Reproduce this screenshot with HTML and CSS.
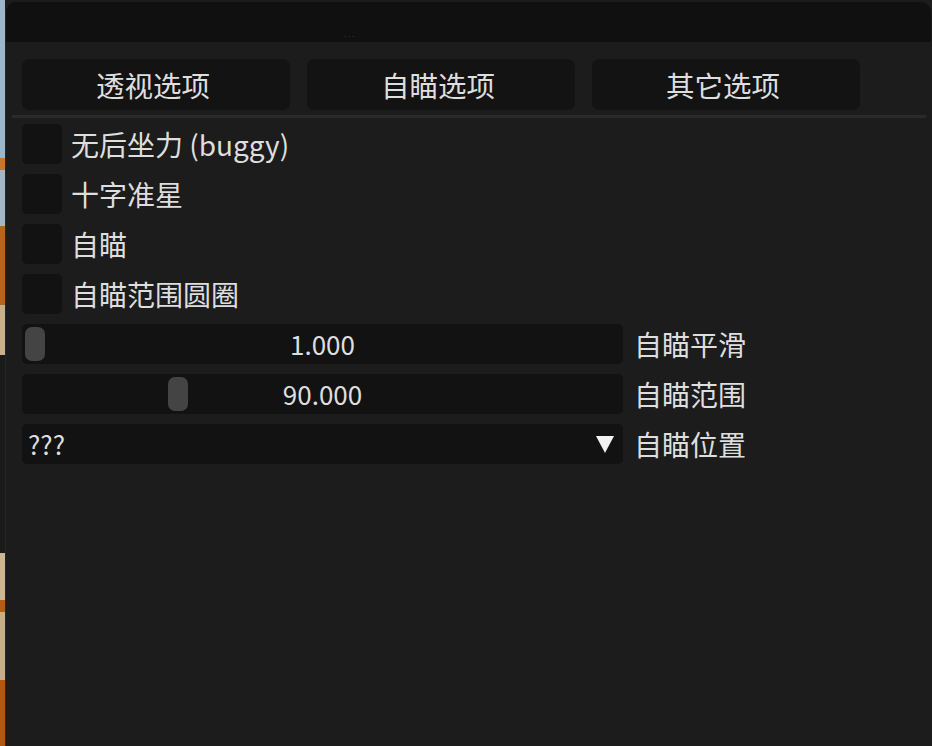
FILE: index.html
```html
<!DOCTYPE html>
<html lang="zh-CN">
<head>
<meta charset="utf-8">
<title>菜单</title>
<link rel="stylesheet" href="styles.css">
</head>
<body>
<div class="window">
  <div class="titlebar"><span class="title">...</span></div>
  <div class="content">
    <div class="tabs">
      <button class="tab">透视选项</button>
      <button class="tab">自瞄选项</button>
      <button class="tab">其它选项</button>
    </div>
    <div class="separator"></div>
    <div class="rows">
      <label class="row"><span class="check"></span><span class="label">无后坐力 (buggy)</span></label>
      <label class="row"><span class="check"></span><span class="label">十字准星</span></label>
      <label class="row"><span class="check"></span><span class="label">自瞄</span></label>
      <label class="row"><span class="check"></span><span class="label">自瞄范围圆圈</span></label>
      <div class="row">
        <div class="frame slider">
          <span class="grab" style="left: 3px"></span>
          <span class="value">1.000</span>
        </div>
        <span class="label side">自瞄平滑</span>
      </div>
      <div class="row">
        <div class="frame slider">
          <span class="grab" style="left: 146px"></span>
          <span class="value">90.000</span>
        </div>
        <span class="label side">自瞄范围</span>
      </div>
      <div class="row">
        <div class="frame combo">
          <span class="current">???</span>
          <svg class="arrow" width="18" height="17" viewBox="0 0 18 17"><polygon points="0,0 18,0 9,17" fill="#f2f2f2"/></svg>
        </div>
        <span class="label side">自瞄位置</span>
      </div>
    </div>
  </div>
</div>
</body>
</html>
```

FILE: styles.css
```css
html, body {
  margin: 0;
  padding: 0;
  height: 100%;
  overflow: hidden;
}

body {
  background-color: #1c1c1c;
  background-image: linear-gradient(to bottom,
    #9cb6cc 0px, #9cb6cc 158px,
    #c8762e 158px, #c8762e 170px,
    #9fb7c9 170px, #9fb7c9 226px,
    #b8641c 226px, #b8641c 305px,
    #c9b08a 305px, #c9b08a 355px,
    #1a1a1a 355px, #1a1a1a 553px,
    #cdb692 553px, #cdb692 600px,
    #b35d18 600px, #b35d18 612px,
    #c7ae88 612px, #c7ae88 680px,
    #b0580f 680px, #b0580f 746px);
  background-size: 5px 100%;
  background-repeat: no-repeat;
  font-family: "Noto Sans CJK SC", "Noto Sans", sans-serif;
  color: #dedede;
}

.window {
  margin: 2px 0 0 5px;
  width: 926px;
  height: 780px;
  background: #1c1c1c;
  border-left: 1px solid #262626;
  box-sizing: border-box;
  border-radius: 10px 10px 0 0;
  overflow: hidden;
}

.titlebar {
  height: 40px;
  background: #101010;
  padding-left: 338px;
  box-sizing: border-box;
  display: flex;
  align-items: flex-end;
}

.title {
  font-family: "DejaVu Sans", sans-serif;
  font-size: 9px;
  line-height: 9px;
  letter-spacing: 1px;
  color: #3a3a3a;
  padding-bottom: 3px;
}

.content {
  padding: 17px 0 0 16px;
}

.tabs {
  display: flex;
  gap: 17px;
}

.tab {
  width: 268px;
  height: 51px;
  border: none;
  border-radius: 7px;
  background: #131313;
  color: #dedede;
  font-family: "Noto Sans CJK SC", "Noto Sans", sans-serif;
  font-size: 28.5px;
  line-height: 51px;
  padding: 0 6px 0 0;
}

.separator {
  margin: 5px 5px 0 -10px;
  height: 3px;
  background: #2a2a2a;
}

.rows {
  display: flex;
  flex-direction: column;
  gap: 10px;
  padding-top: 6px;
}

.row {
  display: flex;
  align-items: center;
  height: 40px;
}

.check {
  width: 40px;
  height: 40px;
  border-radius: 5px;
  background: #121212;
  margin-right: 9px;
}

.label {
  font-size: 28px;
  line-height: 40px;
  white-space: nowrap;
}

.frame {
  position: relative;
  width: 601px;
  height: 40px;
  background: #121212;
  border-radius: 5px;
  display: flex;
  align-items: center;
}

.side {
  margin-left: 11px;
}

.slider {
  justify-content: center;
}

.grab {
  position: absolute;
  top: 3px;
  width: 20px;
  height: 34px;
  border-radius: 7px;
  background: #444444;
}

.value {
  font-size: 26px;
  line-height: 40px;
}

.combo {
  justify-content: space-between;
  padding: 0 9px 0 6px;
  box-sizing: border-box;
}

.current {
  font-size: 26px;
  line-height: 40px;
}

.arrow {
  display: block;
}
```
